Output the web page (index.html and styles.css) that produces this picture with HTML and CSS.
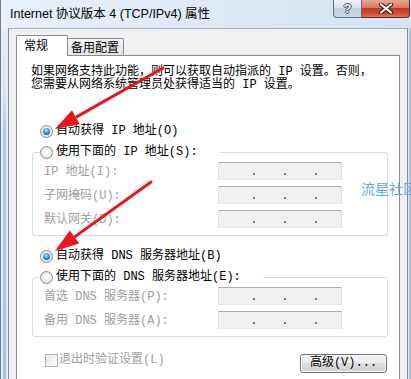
FILE: index.html
```html
<!DOCTYPE html>
<html>
<head>
<meta charset="utf-8">
<link rel="stylesheet" href="styles.css">
</head>
<body>
<div class="window">
  <div class="titlebar">
    <div class="title">Internet 协议版本 4 (TCP/IPv4) 属性</div>
    <div class="caption">
      <div class="btn-help"><span>?</span></div>
      <div class="btn-close">
        <svg width="16" height="11" viewBox="0 0 16 11"><path d="M3 1.5 L13 9.5 M13 1.5 L3 9.5" stroke="#4a1c16" stroke-width="4.2" stroke-linecap="round"/><path d="M3 1.5 L13 9.5 M13 1.5 L3 9.5" stroke="#ffffff" stroke-width="2.2" stroke-linecap="round"/></svg>
      </div>
    </div>
  </div>
  <div class="frame-row">
    <div class="frame-left"></div>
    <div class="client">
      <div class="tabs">
        <div class="tab active">常规</div>
        <div class="tab inactive">备用配置</div>
      </div>
      <div class="panel">
        <p class="intro">如果网络支持此功能，则可以获取自动指派的 IP 设置。否则，<br>您需要从网络系统管理员处获得适当的 IP 设置。</p>

        <div class="radio-row first"><span class="radio on"></span><span class="lbl">自动获得 IP 地址(O)</span></div>
        <fieldset class="group">
          <legend><span class="radio"></span><span class="lbl">使用下面的 IP 地址(S):</span></legend>
          <div class="fields">
            <span class="flabel">IP 地址(I):</span>
            <span class="ipbox"><i></i><i></i><i></i></span>
            <span class="flabel">子网掩码(U):</span>
            <span class="ipbox"><i></i><i></i><i></i></span>
            <span class="flabel">默认网关(D):</span>
            <span class="ipbox"><i></i><i></i><i></i></span>
          </div>
        </fieldset>

        <div class="radio-row second"><span class="radio on"></span><span class="lbl">自动获得 DNS 服务器地址(B)</span></div>
        <fieldset class="group">
          <legend><span class="radio"></span><span class="lbl">使用下面的 DNS 服务器地址(E):</span></legend>
          <div class="fields">
            <span class="flabel">首选 DNS 服务器(P):</span>
            <span class="ipbox"><i></i><i></i><i></i></span>
            <span class="flabel">备用 DNS 服务器(A):</span>
            <span class="ipbox"><i></i><i></i><i></i></span>
          </div>
        </fieldset>

        <div class="bottom-row">
          <div class="check-wrap"><span class="check"></span><span class="clabel">退出时验证设置(L)</span></div>
          <div class="btn">高级(V)...</div>
        </div>
      </div>
    </div>
    <div class="frame-right"></div>
  </div>

  <div class="watermark">流星社区</div>

  <svg class="arrows" width="411" height="379" viewBox="0 0 411 379">
    <line x1="162" y1="68" x2="76" y2="116.6" stroke="#e8161d" stroke-width="3" stroke-linecap="round"/>
    <polygon points="54,129 78.8,124.2 71,110.2" fill="#e8161d"/>
    <line x1="150" y1="182" x2="74" y2="236.6" stroke="#e8161d" stroke-width="3" stroke-linecap="round"/>
    <polygon points="54,251 78.2,243.5 68.8,230.5" fill="#e8161d"/>
  </svg>
</div>
</body>
</html>
```

FILE: styles.css
```css
* { box-sizing: border-box; }
html, body { margin: 0; padding: 0; }
body { width: 411px; height: 379px; overflow: hidden; background: #fff; }

.window {
  position: relative;
  width: 411px;
  height: 379px;
  overflow: hidden;
  border-left: 1px solid #6f7d8e;
  background: #e2ebf5;
}

.titlebar {
  height: 28px;
  display: flex;
  align-items: flex-start;
  background: linear-gradient(to right, #e8f0f9, #d6e3f1);
}
.title {
  margin: 6px 0 0 9px;
  font: 12.5px/16px "Liberation Sans", "Noto Sans CJK SC", sans-serif;
  color: #000;
  white-space: nowrap;
}
.caption { margin-left: auto; margin-right: 1px; display: flex; }
.btn-help {
  width: 29px;
  height: 18px;
  border: 1px solid #5e6f84;
  border-top: 0;
  border-radius: 0 0 0 4px;
  background: linear-gradient(#eef2f7, #dbe3ed 45%, #c3cfdc 50%, #ccd7e3);
  display: flex;
  align-items: center;
  justify-content: center;
}
.btn-help span {
  font: bold 13px/14px "Liberation Sans", sans-serif;
  color: #f5f7fa;
  text-shadow: 1px 0 #3d4f66, -1px 0 #3d4f66, 0 1px #3d4f66, 0 -1px #3d4f66;
}
.btn-close {
  width: 48px;
  height: 18px;
  border: 1px solid #5a2a25;
  border-left: 0;
  border-top: 0;
  border-radius: 0 0 4px 0;
  background: linear-gradient(#e9a898, #d9765f 45%, #c3371f 50%, #cd4d33 80%, #de7a5b);
  display: flex;
  align-items: center;
  justify-content: center;
}

.frame-row { display: flex; height: 351px; }
.frame-left {
  width: 7px;
  background:
    linear-gradient(to bottom, #e6eef7 0, #dce6f1 60px, #b3cae4 100px, #a8c2e0 100%) 2px 0 / 3px 100% no-repeat,
    #e6edf5;
}
.frame-right {
  width: 3px;
  background: linear-gradient(to right, #e3ebf4 1px, #a9c3e0 1px);
}
.client {
  width: 400px;
  border: 1px solid #7d8ca0;
  border-top-color: #9eadbf;
  border-bottom: 0;
  background: #f0f0f0;
  padding: 6px 7px 0;
}

.tabs {
  display: flex;
  align-items: flex-start;
  height: 21px;
  position: relative;
  z-index: 1;
}
.tab {
  font: 12px/14px "Noto Sans CJK SC", sans-serif;
  color: #000;
  border: 1px solid #898c95;
  border-bottom: 0;
  white-space: nowrap;
}
.tab.active {
  width: 52px;
  height: 21px;
  background: #fff;
  padding: 2px 0 0 7px;
  border-radius: 2px 2px 0 0;
}
.tab.inactive {
  width: 56px;
  height: 17px;
  margin-top: 3px;
  border-left: 0;
  background: linear-gradient(#f4f4f4, #e3e3e3);
  padding: 1px 0 0 3px;
  border-radius: 0 2px 0 0;
}

.panel {
  margin-top: -1px;
  height: 400px;
  border: 1px solid #898c95;
  background: #fff;
  padding: 0 11px 0 14px;
  font: 12px/13px "Liberation Mono", "Noto Sans CJK SC", monospace;
  color: #000;
}
.intro {
  margin: 10px 0 0;
  line-height: 13px;
  white-space: nowrap;
}

.radio-row {
  display: flex;
  align-items: center;
  height: 16px;
  padding-left: 9px;
}
.radio-row.first { margin-top: 31px; }
.radio-row.second { margin-top: 12px; }
.lbl { margin-left: 3px; white-space: nowrap; line-height: 13px; }

.radio {
  flex: none;
  position: relative;
  width: 13px;
  height: 13px;
  border-radius: 50%;
  border: 1px solid #8a8c8e;
  background: radial-gradient(circle at 50% 45%, #ffffff 0, #f6f6f6 35%, #d4d6d8 100%);
}
.radio.on::after {
  content: "";
  position: absolute;
  left: 2px;
  top: 2px;
  width: 7px;
  height: 7px;
  border-radius: 50%;
  background: radial-gradient(circle at 45% 35%, #c9ecff 0, #48abef 35%, #1b5c9e 80%, #0f3f72 100%);
}

.group {
  margin: 5px 0 0 1px;
  width: 356px;
  min-width: 0;
  border: 1px solid #d5dfe5;
  border-radius: 3px;
  padding: 2px 0 7px 7px;
}
.group legend {
  display: flex;
  align-items: center;
  height: 16px;
  padding: 0 22px 0 0;
}
.fields {
  margin-left: 4px;
  display: grid;
  grid-template-columns: 174px 124px;
  grid-auto-rows: 18px;
  row-gap: 6px;
}
.flabel {
  color: #a0a0a0;
  align-self: center;
  padding-top: 2px;
  white-space: nowrap;
}
.ipbox {
  display: flex;
  align-items: flex-end;
  gap: 29px;
  padding: 0 0 4px 34px;
  border: 1px solid;
  border-color: #abadb3 #dbdfe6 #e3e9ef #e2e3ea;
  background: #f0f0f0;
}
.ipbox i {
  display: block;
  width: 2px;
  height: 2px;
  background: #7a7a7a;
}

.bottom-row {
  margin-top: 17px;
  display: flex;
  justify-content: space-between;
  align-items: flex-start;
}
.check-wrap { display: flex; align-items: flex-start; margin-left: 14px; }
.check {
  flex: none;
  width: 13px;
  height: 13px;
  border: 1px solid #b1b1b1;
  background: linear-gradient(135deg, #e6e6e6, #fbfbfb);
  box-shadow: inset 0 0 0 1px #f4f4f4;
}
.clabel { margin-left: 1px; color: #a0a0a0; line-height: 13px; white-space: nowrap; }
.btn {
  width: 87px;
  height: 19px;
  margin-right: 1px;
  border: 1px solid #707070;
  border-radius: 3px;
  background: linear-gradient(#f2f2f2 0, #ebebeb 50%, #dddddd 50%, #cfcfcf 100%);
  box-shadow: inset 0 0 0 1px #fbfbfb;
  text-align: center;
  line-height: 17px;
  white-space: nowrap;
}

.watermark {
  position: absolute;
  left: 360px;
  top: 180px;
  font: 14px/16px "Noto Sans CJK SC", sans-serif;
  color: #5ea7e8;
  white-space: nowrap;
}
.arrows {
  position: absolute;
  left: 0;
  top: 0;
  pointer-events: none;
}
```
